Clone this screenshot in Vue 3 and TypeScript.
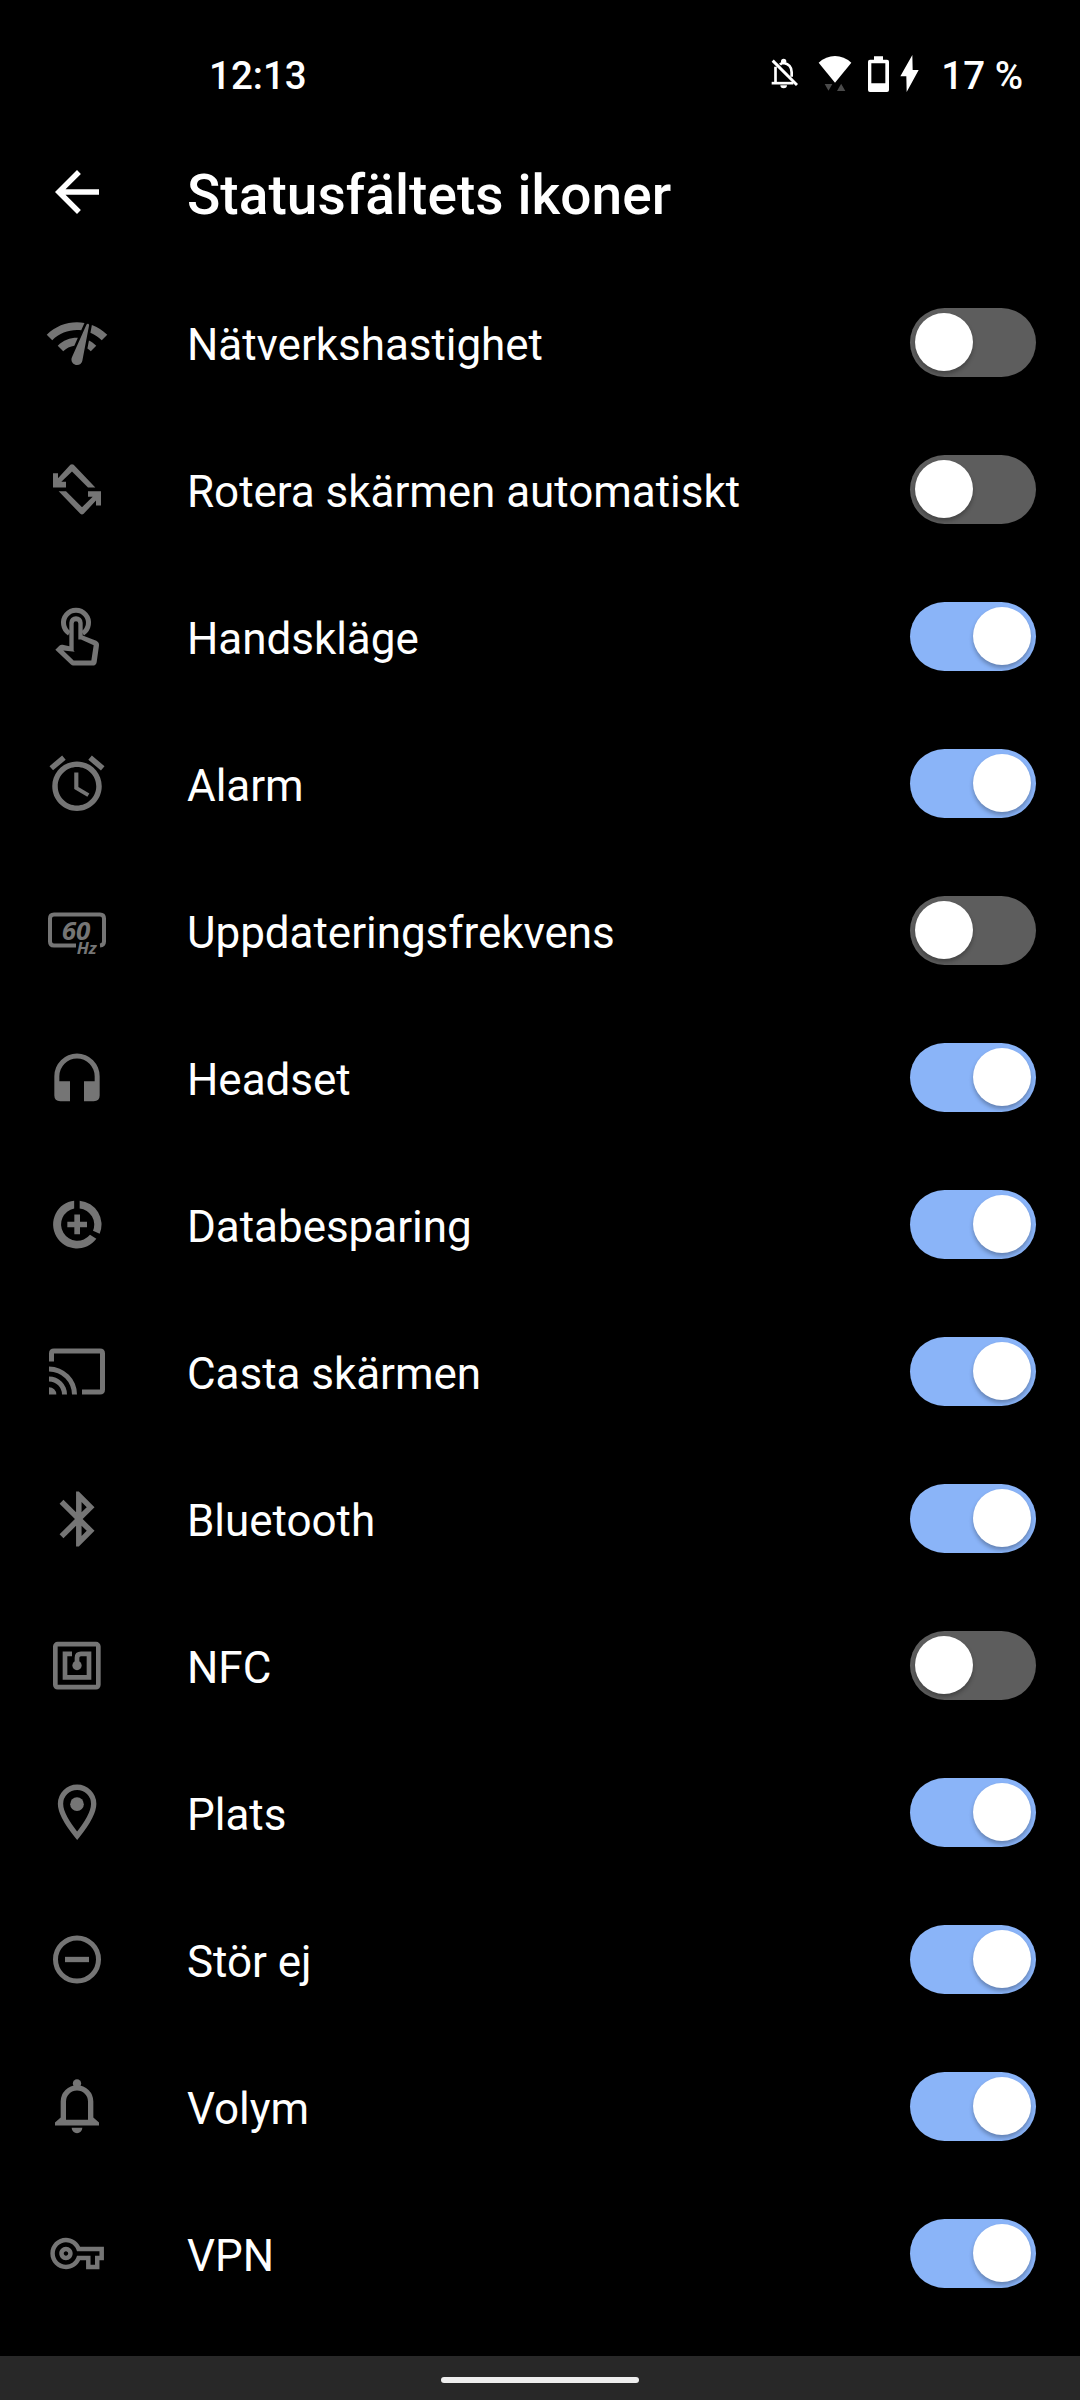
<script setup lang="ts">
import { ref } from 'vue'

interface IconSetting {
  id: string
  label: string
  on: boolean
  viewBox: string
}

const grid = '0 0 24 24'

const settings = ref<IconSetting[]>([
  { id: 'speed', label: 'Nätverkshastighet', on: false, viewBox: grid },
  { id: 'rotate', label: 'Rotera skärmen automatiskt', on: false, viewBox: '132 499.5 198 198' },
  { id: 'touch', label: 'Handskläge', on: true, viewBox: '132 40.5 198 198' },
  { id: 'alarm', label: 'Alarm', on: true, viewBox: grid },
  { id: 'refresh', label: 'Uppdateringsfrekvens', on: false, viewBox: '132 52.5 198 198' },
  { id: 'headset', label: 'Headset', on: true, viewBox: '132 493.5 198 198' },
  { id: 'saver', label: 'Databesparing', on: true, viewBox: '132 34.5 198 198' },
  { id: 'cast', label: 'Casta skärmen', on: true, viewBox: '132 475.5 198 198' },
  { id: 'bluetooth', label: 'Bluetooth', on: true, viewBox: grid },
  { id: 'nfc', label: 'NFC', on: false, viewBox: '132 517.5 198 198' },
  { id: 'place', label: 'Plats', on: true, viewBox: '132 58.5 198 198' },
  { id: 'dnd', label: 'Stör ej', on: true, viewBox: '132 499.5 198 198' },
  { id: 'bell', label: 'Volym', on: true, viewBox: '132 70.5 198 198' },
  { id: 'key', label: 'VPN', on: true, viewBox: '132 511.5 198 198' },
])
</script>

<template>
  <div class="screen">
    <div class="status">
      <span class="clock">12:13</span>
      <div class="tray">
        <svg class="s-bell" width="27" height="40" viewBox="93 39 81 120" fill="none" stroke="#fff">
          <path d="M106.500 80V127M120 74Q124 69 131 69Q155 73 155 97V110" stroke-width="8" />
          <path d="M95 129.500H160" stroke-width="8" />
          <path d="M98 62L171 135" stroke-width="9" />
          <path d="M123 68V64a8 8 0 0 1 16 0V68ZM121 136H141a10 9 0 0 1-20 0Z" fill="#fff" stroke="none" />
        </svg>
        <svg class="s-wifi" width="34" height="40" viewBox="234 39 102 120">
          <path d="M236 68Q258 48 285 48Q312 48 334 68L285 128Z" fill="#fff" />
          <path d="M254 132H277L265.500 152ZM291 153L303.500 131L316 153Z" fill="#4a4a4a" />
        </svg>
        <svg class="s-batt" width="21" height="40" viewBox="384 39 63 120">
          <path fill="#fff" fill-rule="evenodd" d="M402 49H429V59H441Q447 59 447 65V150Q447 156 441 156H390Q384 156 384 150V65Q384 59 390 59H402ZM394 70V130H436V70Z" />
        </svg>
        <svg class="s-bolt" width="19" height="40" viewBox="480 39 57 120">
          <path fill="#fff" d="M517 45L518 90H536L500 156L499 109H481Z" />
        </svg>
        <span>17 %</span>
      </div>
    </div>

    <header class="bar">
      <svg class="back" width="66" height="66" viewBox="0 0 24 24" fill="#fff">
        <path d="M20 11H7.830l5.590-5.590L12 4l-8 8 8 8 1.410-1.410L7.830 13H20v-2z" />
      </svg>
      <h1>Statusfältets ikoner</h1>
    </header>

    <main class="list">
      <div v-for="s in settings" :key="s.id" class="row" @click="s.on = !s.on">
        <svg class="icon" width="66" height="66" :viewBox="s.viewBox" fill="currentColor">
          <path v-if="s.id === 'speed'" d="M15.900 5c-.17 0-.32.09-.41.23l-.07.15-5.180 11.650c-.16.29-.26.61-.26.96 0 1.110.9 2.010 2.010 2.010.96 0 1.770-.68 1.960-1.590l.01-.03L16.400 5.500c0-.28-.22-.5-.5-.5zM1 9l2 2c2.880-2.880 6.790-4.080 10.530-3.620l1.190-2.680C9.890 3.840 4.740 5.270 1 9zm20 2l2-2c-1.640-1.640-3.550-2.820-5.590-3.570l-.53 2.820c1.500.62 2.900 1.530 4.120 2.750zm-4 4l2-2c-.8-.8-1.700-1.420-2.660-1.890l-.55 2.920c.42.27.83.59 1.210.97zM5 13l2 2c1.130-1.130 2.560-1.790 4.030-2l1.280-2.880c-2.630-.08-5.300.87-7.310 2.880z" />
          <path v-else-if="s.id === 'rotate'" d="M211 523Q216 519 221 523L286 591H264L216 543L184 574H198V591H159V548H174V563ZM251 670Q246 674 241 670L176 602H198L246 650L278 619H264V602H303V645H288V630Z" />
          <g v-else-if="s.id === 'touch'">
            <path d="M208 128.700A37.500 37.500 0 1 1 248 128.700" fill="none" stroke="currentColor" stroke-width="15" />
            <path fill-rule="evenodd" d="M208 97a20 20 0 0 1 40 0V135L289 151Q298 156 297 165L290 215Q288 225 278 225H220Q216 225 212 221L166 178L178 166Q182 162 188 163L208 167ZM221 99a7 7 0 0 1 14 0V147H243L281 164L274 210H221L190 180L224 184L221 180Z" />
          </g>
          <path v-else-if="s.id === 'alarm'" transform="translate(0 -.2)" d="M22 5.720l-4.600-3.860-1.290 1.530 4.600 3.860L22 5.720zM7.880 3.390L6.600 1.860 2 5.710l1.290 1.530 4.590-3.850zM12.500 8H11v6l4.750 2.850.75-1.230-4-2.370V8zM12 4c-4.970 0-9 4.030-9 9s4.020 9 9 9c4.970 0 9-4.030 9-9s-4.030-9-9-9zm0 16c-3.870 0-7-3.130-7-7s3.130-7 7-7 7 3.130 7 7-3.130 7-7 7z" />
          <g v-else-if="s.id === 'refresh'">
            <path d="M228 195H162Q150 195 150 183V114Q150 102 162 102H300Q312 102 312 114V183Q312 194 300 195" fill="none" stroke="currentColor" stroke-width="12" />
            <text class="hz"><tspan x="185" y="177" font-size="76" textLength="86" lengthAdjust="spacingAndGlyphs">60</tspan><tspan x="230" y="220" font-size="46" textLength="60" lengthAdjust="spacingAndGlyphs">Hz</tspan></text>
          </g>
          <path v-else-if="s.id === 'headset'" d="M163 587a68 68 0 0 1 136 0V645Q299 662 281 662H252V602H284V587a53 53 0 0 0-106 0V602H210V662H181Q163 662 163 645Z" />
          <path v-else-if="s.id === 'saver'" d="M239 60.400A72 72 0 0 1 299 160L279 151A49 49 0 0 0 239 83.700ZM222.500 60.400A72 72 0 1 0 289 175L270 163A49 49 0 1 1 222.500 83.700ZM223 102H240V124H261V140H240V161H223V140H202V124H223Z" />
          <path v-else-if="s.id === 'cast'" d="M147 543V519q0-15 15-15H300q15 0 15 15V627q0 15-15 15H246V627H300V519H162V543ZM147 620A22 22 0 0 1 169 642H147ZM147 588A54 54 0 0 1 201 642H186A39 39 0 0 0 147 603ZM147 558A84 84 0 0 1 231 642H216A69 69 0 0 0 147 573Z" />
          <path v-else-if="s.id === 'bluetooth'" transform="translate(.66 0)" d="M17.710 7.710L12 2h-1v7.590L6.410 5 5 6.410 10.590 12 5 17.590 6.410 19 11 14.410V22h1l5.710-5.710-4.300-4.290 4.300-4.290zM13 5.830l1.880 1.880L13 9.590V5.830zm1.880 10.460L13 18.170v-3.760l1.880 1.880z" />
          <g v-else-if="s.id === 'nfc'" fill="none" stroke="currentColor" stroke-width="14">
            <rect x="166" y="551" width="129" height="129" rx="7" />
            <path d="M216 580H195V650.500H267V580H243Q231 580 231 592V612" />
            <circle cx="231" cy="615" r="14" fill="currentColor" stroke="none" />
          </g>
          <g v-else-if="s.id === 'place'">
            <path d="M231.500 226Q181.500 165 181.500 130a49.800 49.800 0 0 1 99.600 0Q281 165 231.500 226Z" fill="none" stroke="currentColor" stroke-width="16" />
            <circle cx="231" cy="131" r="20.500" />
          </g>
          <g v-else-if="s.id === 'dnd'">
            <circle cx="231" cy="597" r="64.500" fill="none" stroke="currentColor" stroke-width="15" />
            <path d="M195 589H267V605H195Z" />
          </g>
          <g v-else-if="s.id === 'bell'">
            <circle cx="231" cy="99" r="12.500" />
            <path fill-rule="evenodd" d="M182 153a49 49 0 0 1 98 0V201L297 216V225H165V216L182 201ZM198 208V153a33 33 0 0 1 66 0V208Z" />
            <path d="M215 232H247a16 16 0 0 1-32 0Z" />
          </g>
          <path v-else transform="translate(151 528.600) scale(6.700)" d="M22 19h-6v-4h-2.680c-1.140 2.420-3.600 4-6.320 4-3.860 0-7-3.140-7-7s3.140-7 7-7c2.720 0 5.170 1.580 6.320 4H24v6h-2v4zm-4-2h2v-4h2v-2H11.940l-.23-.67C11.010 8.340 9.110 7 7 7c-2.760 0-5 2.240-5 5s2.240 5 5 5c2.110 0 4.010-1.340 4.710-3.330l.23-.67H18v4zM7 15c-1.650 0-3-1.350-3-3s1.350-3 3-3 3 1.350 3 3-1.350 3-3 3zm0-4c-.55 0-1 .45-1 1s.45 1 1 1 1-.45 1-1-.45-1-1-1z" />
        </svg>
        <span class="label">{{ s.label }}</span>
        <div class="switch" :class="{ on: s.on }"><i /></div>
      </div>
    </main>

    <footer class="nav"><i /></footer>
  </div>
</template>

<style>
body {
  background: #000;
}
</style>

<style scoped>
.screen {
  width: 1080px;
  height: 2400px;
  display: flex;
  flex-direction: column;
  background: #000;
  color: #fff;
  font-family: Roboto, sans-serif;
  overflow: hidden;
}
.status {
  box-sizing: border-box;
  height: 125px;
  padding: 25px 57px 0 209px;
  display: flex;
  align-items: center;
  justify-content: space-between;
  font-size: 38.5px;
  font-weight: 500;
  white-space: nowrap;
}
.tray {
  display: flex;
  align-items: center;
}
.tray svg {
  margin-top: -4px;
}
.s-bell {
  margin-right: 20px;
}
.s-wifi {
  margin-right: 16px;
}
.s-batt {
  margin-right: 11px;
}
.tray .s-bolt {
  margin-right: 22px;
}
.bar {
  box-sizing: border-box;
  height: 144px;
  padding: 0 0 4px 44px;
  display: flex;
  align-items: center;
}
.back {
  margin-top: -6px;
}
h1 {
  margin: 0 0 0 77px;
  font-size: 55px;
  font-weight: 500;
  line-height: 64px;
  letter-spacing: 0.06px;
  white-space: nowrap;
}
.row {
  height: 147px;
  padding: 0 44px;
  display: flex;
  align-items: center;
}
.icon {
  flex: none;
  color: #757575;
}
.label {
  flex: 1;
  margin-left: 77px;
  padding-top: 5px;
  font-size: 44px;
  line-height: 52px;
  letter-spacing: -0.04px;
}
.hz {
  font-family: "Open Sans", sans-serif;
  font-style: italic;
  font-weight: 700;
}
.switch {
  box-sizing: border-box;
  width: 126px;
  height: 69px;
  padding: 5px;
  border-radius: 35px;
  background: #5d5d5d;
  display: flex;
}
.switch.on {
  background: #8ab4f8;
  justify-content: flex-end;
}
.switch i {
  width: 58px;
  height: 58px;
  border-radius: 50%;
  background: #fff;
  box-shadow: 0 3px 4px rgba(0, 0, 0, 0.28);
}
.nav {
  margin-top: auto;
  height: 44px;
  background: #282828;
  display: flex;
  justify-content: center;
}
.nav i {
  margin-top: 21px;
  width: 198px;
  height: 6px;
  border-radius: 3px;
  background: #eee;
}
</style>
